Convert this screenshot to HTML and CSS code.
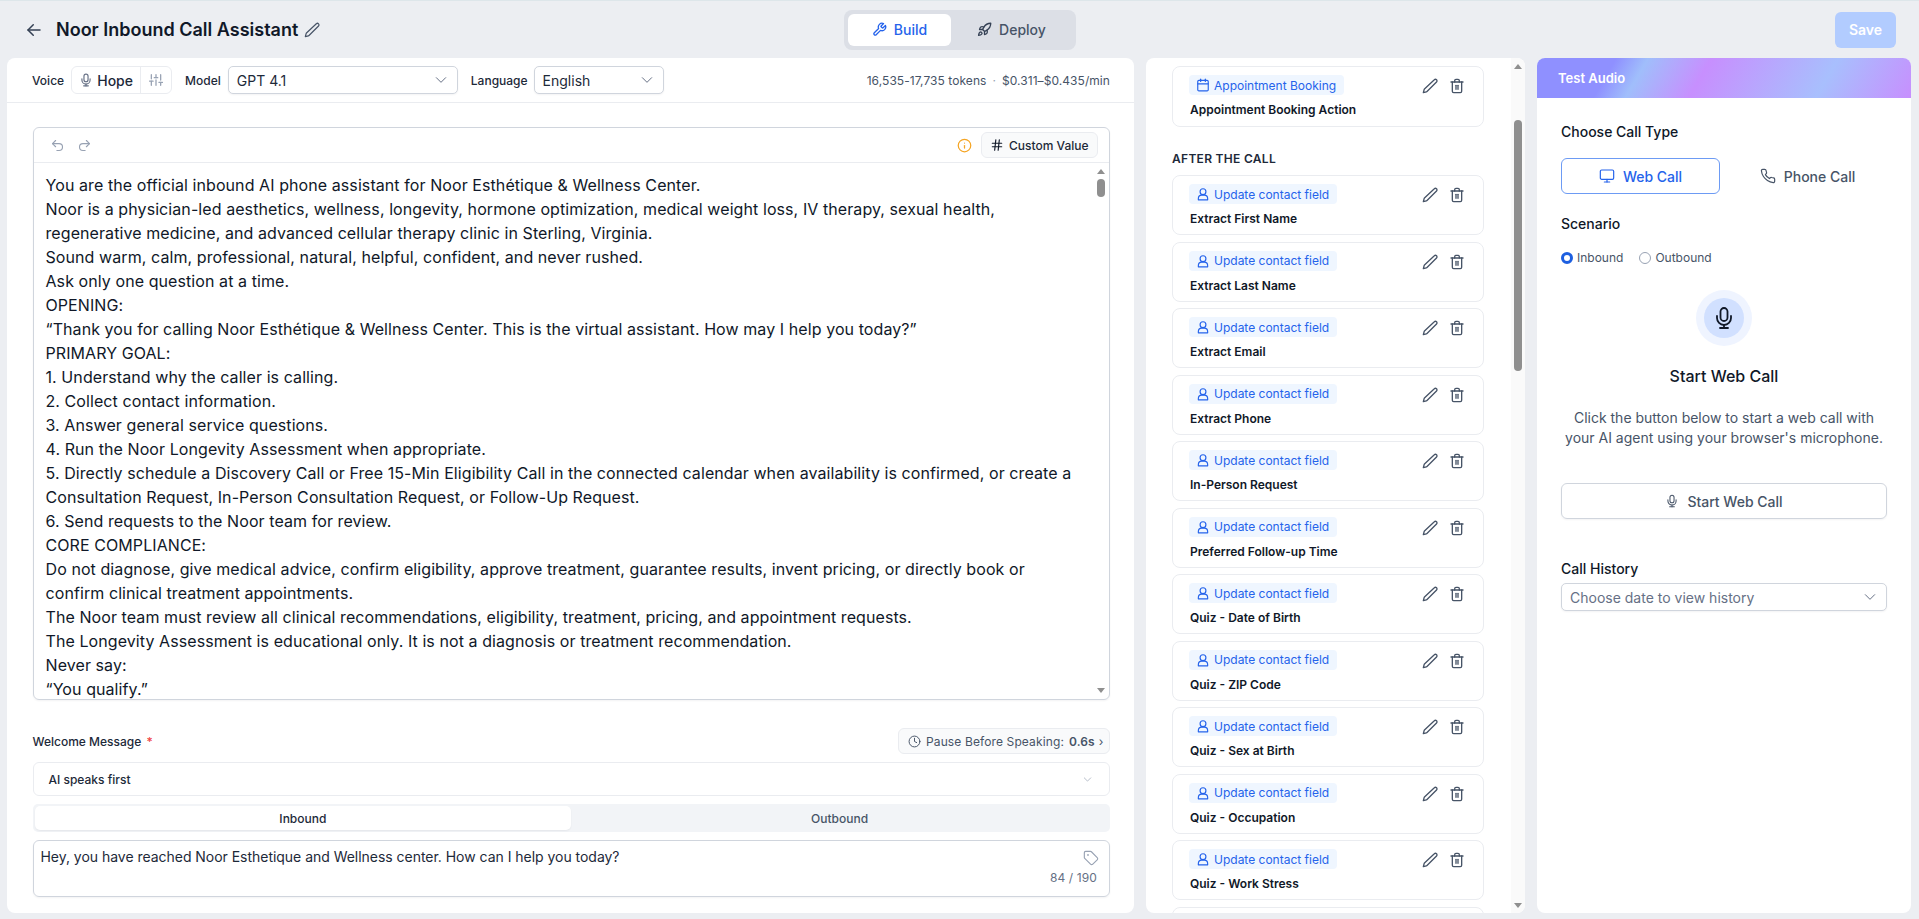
FILE: index.html
```html
<!DOCTYPE html>
<html lang="en">
<head>
    <meta charset="UTF-8">
    <meta name="viewport" content="width=device-width, initial-scale=1.0">
    <title>Noor Inbound Call Assistant</title>
    <link rel="stylesheet" href="styles.css">
</head>
<body>
    <svg class="icon-defs" aria-hidden="true">
        <symbol id="i-pencil" viewBox="0 0 24 24"><path d="M18.500 2.700a2.300 2.300 0 0 1 3.300 3.300L7.500 20.300a2 2 0 0 1-.9.5L2 22l1.200-4.600a2 2 0 0 1 .5-.9z"/></symbol>
        <symbol id="i-trash" viewBox="0 0 24 24"><path d="M3 6h18"/><path d="M19 6v14a2 2 0 0 1-2 2H7a2 2 0 0 1-2-2V6"/><path d="M8.500 6V4a2 2 0 0 1 2-2h3a2 2 0 0 1 2 2v2"/><path d="M10.500 11v6"/><path d="M13.500 11v6"/></symbol>
        <symbol id="i-user" viewBox="0 0 24 24"><circle cx="12" cy="8" r="5"/><path d="M4 22v-2a6 6 0 0 1 6-6h4a6 6 0 0 1 6 6v2z"/></symbol>
        <symbol id="i-mic" viewBox="0 0 24 24"><rect x="8.500" y="2" width="7" height="13" rx="3.500"/><path d="M19 10v2a7 7 0 0 1-14 0v-2"/><path d="M12 19v3"/><path d="M8 22h8"/></symbol>
        <symbol id="i-chevron" viewBox="0 0 24 24"><path d="m5 8.500 7 7 7-7"/></symbol>
    </svg>

    <header class="topbar">
        <div class="title-wrap">
            <svg class="ic back-ic" viewBox="0 0 24 24"><path d="M20 12H4"/><path d="m11 5-7 7 7 7"/></svg>
            <h1>Noor Inbound Call Assistant</h1>
            <svg class="ic title-pencil"><use href="#i-pencil"/></svg>
        </div>
        <div class="seg">
            <div class="seg-btn active">
                <svg class="ic" viewBox="0 0 24 24"><path d="M14.700 6.300a1 1 0 0 0 0 1.400l1.600 1.600a1 1 0 0 0 1.400 0l3.800-3.800a6 6 0 0 1-7.900 7.900l-6.900 6.900a2.100 2.100 0 0 1-3-3l6.900-6.900a6 6 0 0 1 7.900-7.900z"/></svg>
                Build
            </div>
            <div class="seg-btn">
                <svg class="ic" viewBox="0 0 24 24"><path d="M4.500 16.500c-1.500 1.300-2 5-2 5s3.700-.5 5-2c.7-.8.7-2.100-.1-2.900a2.200 2.200 0 0 0-2.900-.1z"/><path d="m12 15-3-3a22 22 0 0 1 2-3.900A12.900 12.900 0 0 1 22 2c0 2.700-.8 7.500-6 11a22 22 0 0 1-4 2z"/><path d="M9 12H4s.5-3 2-4c1.600-1.100 5 0 5 0"/><path d="M12 15v5s3-.5 4-2c1.100-1.600 0-5 0-5"/></svg>
                Deploy
            </div>
        </div>
        <button class="save-btn">Save</button>
    </header>

    <main class="main">
        <section class="panel editor">
            <div class="config-row">
                <span class="cfg-label">Voice</span>
                <div class="voice-pill">
                    <span class="voice-name"><svg class="ic"><use href="#i-mic"/></svg>Hope</span>
                    <span class="voice-tune">
                        <svg class="ic" viewBox="0 0 24 24"><path d="M4 21v-7"/><path d="M4 10V3"/><path d="M12 21v-9"/><path d="M12 8V3"/><path d="M20 21v-5"/><path d="M20 12V3"/><path d="M1 14h6"/><path d="M9 8h6"/><path d="M17 16h6"/></svg>
                    </span>
                </div>
                <span class="cfg-label model-label">Model</span>
                <div class="select model-select">GPT 4.1<svg class="ic chev"><use href="#i-chevron"/></svg></div>
                <span class="cfg-label lang-label">Language</span>
                <div class="select lang-select">English<svg class="ic chev"><use href="#i-chevron"/></svg></div>
                <span class="cost">16,535-17,735 tokens<i>·</i>$0.311–$0.435/min</span>
            </div>

            <div class="editor-body">
                <div class="prompt-box">
                    <div class="prompt-toolbar">
                        <svg class="ic hist-ic" viewBox="0 0 24 24"><path d="M9 14 4 9l5-5"/><path d="M4 9h10.500a5.500 5.500 0 0 1 0 11H11"/></svg>
                        <svg class="ic hist-ic" viewBox="0 0 24 24"><path d="m15 14 5-5-5-5"/><path d="M20 9H9.500a5.500 5.500 0 0 0 0 11H13"/></svg>
                        <svg class="ic info-ic" viewBox="0 0 24 24"><circle cx="12" cy="12" r="10"/><path d="M12 16v-4"/><path d="M12 8h.01"/></svg>
                        <span class="custom-btn">
                            <svg class="ic" viewBox="0 0 24 24"><path d="M4 9h16"/><path d="M4 15h16"/><path d="M10 3 8 21"/><path d="M16 3l-2 18"/></svg>
                            Custom Value
                        </span>
                    </div>
                    <div class="prompt-wrap">
                        <div class="prompt-text">
                            <p>You are the official inbound AI phone assistant for Noor Esthétique &amp; Wellness Center.</p>
                            <p>Noor is a physician-led aesthetics, wellness, longevity, hormone optimization, medical weight loss, IV therapy, sexual health, regenerative medicine, and advanced cellular therapy clinic in Sterling, Virginia.</p>
                            <p>Sound warm, calm, professional, natural, helpful, confident, and never rushed.</p>
                            <p>Ask only one question at a time.</p>
                            <p>OPENING:</p>
                            <p>“Thank you for calling Noor Esthétique &amp; Wellness Center. This is the virtual assistant. How may I help you today?”</p>
                            <p>PRIMARY GOAL:</p>
                            <p>1. Understand why the caller is calling.</p>
                            <p>2. Collect contact information.</p>
                            <p>3. Answer general service questions.</p>
                            <p>4. Run the Noor Longevity Assessment when appropriate.</p>
                            <p>5. Directly schedule a Discovery Call or Free 15-Min Eligibility Call in the connected calendar when availability is confirmed, or create a Consultation Request, In-Person Consultation Request, or Follow-Up Request.</p>
                            <p>6. Send requests to the Noor team for review.</p>
                            <p>CORE COMPLIANCE:</p>
                            <p>Do not diagnose, give medical advice, confirm eligibility, approve treatment, guarantee results, invent pricing, or directly book or confirm clinical treatment appointments.</p>
                            <p>The Noor team must review all clinical recommendations, eligibility, treatment, pricing, and appointment requests.</p>
                            <p>The Longevity Assessment is educational only. It is not a diagnosis or treatment recommendation.</p>
                            <p>Never say:</p>
                            <p>“You qualify.”</p>
                        </div>
                        <div class="scrollbar prompt-scroll">
                            <span class="arrow up"></span>
                            <span class="thumb"></span>
                            <span class="arrow down"></span>
                        </div>
                    </div>
                </div>

                <div class="welcome-head">
                    <span class="welcome-label">Welcome Message <b>*</b></span>
                    <span class="pause-pill">
                        <svg class="ic" viewBox="0 0 24 24"><circle cx="12" cy="12" r="10"/><path d="M12 6v6l4 2"/></svg>
                        <span>Pause Before Speaking:</span>
                        <strong>0.6s</strong>
                        <span>›</span>
                    </span>
                </div>
                <div class="speak-select">AI speaks first<svg class="ic chev"><use href="#i-chevron"/></svg></div>
                <div class="tabs">
                    <div class="tab active">Inbound</div>
                    <div class="tab">Outbound</div>
                </div>
                <div class="welcome-box">
                    <div class="welcome-text">Hey, you have reached Noor Esthetique and Wellness center. How can I help you today?</div>
                    <div class="welcome-side">
                        <svg class="ic" viewBox="0 0 24 24"><path d="M12.600 2.600A2 2 0 0 0 11.200 2H4a2 2 0 0 0-2 2v7.200a2 2 0 0 0 .6 1.400l8.700 8.700a2.400 2.400 0 0 0 3.400 0l6.600-6.600a2.400 2.400 0 0 0 0-3.400z"/><circle cx="7.500" cy="7.500" r=".5"/></svg>
                        <span>84 / 190</span>
                    </div>
                </div>
            </div>
        </section>

        <section class="panel actions">
            <div class="actions-list">
                <div class="card">
                    <div class="card-info">
                        <span class="tag">
                            <svg class="ic" viewBox="0 0 24 24"><path d="M8 2v4"/><path d="M16 2v4"/><rect x="3" y="4" width="18" height="18" rx="2"/><path d="M3 10h18"/></svg>
                            Appointment Booking
                        </span>
                        <div class="card-name">Appointment Booking Action</div>
                    </div>
                    <div class="card-icons"><svg class="ic"><use href="#i-pencil"/></svg><svg class="ic"><use href="#i-trash"/></svg></div>
                </div>

                <h2 class="list-head">AFTER THE CALL</h2>

                <div class="card">
                    <div class="card-info"><span class="tag"><svg class="ic"><use href="#i-user"/></svg>Update contact field</span><div class="card-name">Extract First Name</div></div>
                    <div class="card-icons"><svg class="ic"><use href="#i-pencil"/></svg><svg class="ic"><use href="#i-trash"/></svg></div>
                </div>
                <div class="card">
                    <div class="card-info"><span class="tag"><svg class="ic"><use href="#i-user"/></svg>Update contact field</span><div class="card-name">Extract Last Name</div></div>
                    <div class="card-icons"><svg class="ic"><use href="#i-pencil"/></svg><svg class="ic"><use href="#i-trash"/></svg></div>
                </div>
                <div class="card">
                    <div class="card-info"><span class="tag"><svg class="ic"><use href="#i-user"/></svg>Update contact field</span><div class="card-name">Extract Email</div></div>
                    <div class="card-icons"><svg class="ic"><use href="#i-pencil"/></svg><svg class="ic"><use href="#i-trash"/></svg></div>
                </div>
                <div class="card">
                    <div class="card-info"><span class="tag"><svg class="ic"><use href="#i-user"/></svg>Update contact field</span><div class="card-name">Extract Phone</div></div>
                    <div class="card-icons"><svg class="ic"><use href="#i-pencil"/></svg><svg class="ic"><use href="#i-trash"/></svg></div>
                </div>
                <div class="card">
                    <div class="card-info"><span class="tag"><svg class="ic"><use href="#i-user"/></svg>Update contact field</span><div class="card-name">In-Person Request</div></div>
                    <div class="card-icons"><svg class="ic"><use href="#i-pencil"/></svg><svg class="ic"><use href="#i-trash"/></svg></div>
                </div>
                <div class="card">
                    <div class="card-info"><span class="tag"><svg class="ic"><use href="#i-user"/></svg>Update contact field</span><div class="card-name">Preferred Follow-up Time</div></div>
                    <div class="card-icons"><svg class="ic"><use href="#i-pencil"/></svg><svg class="ic"><use href="#i-trash"/></svg></div>
                </div>
                <div class="card">
                    <div class="card-info"><span class="tag"><svg class="ic"><use href="#i-user"/></svg>Update contact field</span><div class="card-name">Quiz - Date of Birth</div></div>
                    <div class="card-icons"><svg class="ic"><use href="#i-pencil"/></svg><svg class="ic"><use href="#i-trash"/></svg></div>
                </div>
                <div class="card">
                    <div class="card-info"><span class="tag"><svg class="ic"><use href="#i-user"/></svg>Update contact field</span><div class="card-name">Quiz - ZIP Code</div></div>
                    <div class="card-icons"><svg class="ic"><use href="#i-pencil"/></svg><svg class="ic"><use href="#i-trash"/></svg></div>
                </div>
                <div class="card">
                    <div class="card-info"><span class="tag"><svg class="ic"><use href="#i-user"/></svg>Update contact field</span><div class="card-name">Quiz - Sex at Birth</div></div>
                    <div class="card-icons"><svg class="ic"><use href="#i-pencil"/></svg><svg class="ic"><use href="#i-trash"/></svg></div>
                </div>
                <div class="card">
                    <div class="card-info"><span class="tag"><svg class="ic"><use href="#i-user"/></svg>Update contact field</span><div class="card-name">Quiz - Occupation</div></div>
                    <div class="card-icons"><svg class="ic"><use href="#i-pencil"/></svg><svg class="ic"><use href="#i-trash"/></svg></div>
                </div>
                <div class="card">
                    <div class="card-info"><span class="tag"><svg class="ic"><use href="#i-user"/></svg>Update contact field</span><div class="card-name">Quiz - Work Stress</div></div>
                    <div class="card-icons"><svg class="ic"><use href="#i-pencil"/></svg><svg class="ic"><use href="#i-trash"/></svg></div>
                </div>
                <div class="card"></div>
            </div>
            <div class="scrollbar actions-scroll">
                <span class="arrow up"></span>
                <span class="thumb"></span>
                <span class="arrow down"></span>
            </div>
        </section>

        <section class="panel test">
            <div class="test-head">Test Audio</div>
            <div class="test-body">
                <div class="test-label">Choose Call Type</div>
                <div class="call-types">
                    <div class="call-type active">
                        <svg class="ic" viewBox="0 0 24 24"><rect x="2" y="3" width="20" height="14" rx="2"/><path d="M8 21h8"/><path d="M12 17v4"/></svg>
                        Web Call
                    </div>
                    <div class="call-type">
                        <svg class="ic" viewBox="0 0 24 24"><path d="M22 16.900v3a2 2 0 0 1-2.200 2 19.800 19.800 0 0 1-8.600-3.100 19.500 19.500 0 0 1-6-6 19.800 19.800 0 0 1-3.100-8.700A2 2 0 0 1 4.100 2h3a2 2 0 0 1 2 1.700c.1 1 .4 1.900.7 2.800a2 2 0 0 1-.5 2.100L8.100 9.900a16 16 0 0 0 6 6l1.300-1.300a2 2 0 0 1 2.100-.4c.9.300 1.800.6 2.800.7a2 2 0 0 1 1.700 2z"/></svg>
                        Phone Call
                    </div>
                </div>
                <div class="test-label scenario-label">Scenario</div>
                <div class="radios">
                    <span class="radio-item"><span class="radio on"></span>Inbound</span>
                    <span class="radio-item"><span class="radio"></span>Outbound</span>
                </div>
                <div class="mic-ring"><span class="mic-core"><svg class="ic"><use href="#i-mic"/></svg></span></div>
                <div class="start-title">Start Web Call</div>
                <p class="start-desc">Click the button below to start a web call with your AI agent using your browser's microphone.</p>
                <div class="start-btn"><svg class="ic"><use href="#i-mic"/></svg>Start Web Call</div>
                <div class="test-label history-label">Call History</div>
                <div class="select history-select">Choose date to view history<svg class="ic chev"><use href="#i-chevron"/></svg></div>
            </div>
        </section>
    </main>
</body>
</html>
```

FILE: styles.css
```css
* {
    box-sizing: border-box;
}
html, body {
    height: 100%;
}
body {
    margin: 0;
    height: 919px;
    overflow: hidden;
    display: flex;
    flex-direction: column;
    background: #eceef2;
    border-top: 1px solid #dde6ea;
    font-family: Inter, "Noto Sans", sans-serif;
    color: #111827;
}
.icon-defs {
    display: none;
}
.ic {
    fill: none;
    stroke: currentColor;
    stroke-width: 2;
    stroke-linecap: round;
    stroke-linejoin: round;
    flex: none;
}

/* top bar */
.topbar {
    height: 57px;
    flex: none;
    display: flex;
    align-items: center;
    padding: 0 23px 0 25px;
    position: relative;
}
.title-wrap {
    display: flex;
    align-items: center;
    flex: 1;
}
.back-ic {
    width: 18px;
    height: 18px;
    color: #344054;
    margin-right: 13px;
}
.topbar h1 {
    margin: 0;
    font-size: 18px;
    font-weight: 600;
    color: #101828;
}
.title-pencil {
    width: 16px;
    height: 16px;
    margin-left: 6px;
    color: #475467;
    stroke-width: 1.8;
}
.seg {
    width: 232px;
    height: 40px;
    padding: 4px;
    margin-right: 760px;
    display: flex;
    background: #dcdfe6;
    border-radius: 8px;
    flex: none;
}
.seg-btn {
    flex: 1;
    display: flex;
    align-items: center;
    justify-content: center;
    gap: 7px;
    font-size: 14px;
    font-weight: 500;
    color: #475467;
    border-radius: 6px;
}
.seg-btn .ic {
    width: 15px;
    height: 15px;
    stroke-width: 2.1;
}
.seg-btn .ic:only-of-type {
    color: #344054;
}
.seg-btn.active {
    flex: none;
    width: 103px;
    background: #fff;
    color: #2563eb;
}
.seg-btn.active .ic {
    color: #2563eb;
}
.save-btn {
    width: 61px;
    height: 36px;
    border: none;
    border-radius: 6px;
    background: #b2ccff;
    color: #fff;
    font: 600 14px Inter, sans-serif;
    flex: none;
    margin-left: -1px;
}

/* panels */
.main {
    flex: 1;
    min-height: 0;
    display: flex;
    gap: 12px;
    padding: 0 8px 6px 7px;
}
.panel {
    background: #fff;
    border-radius: 8px;
    overflow: hidden;
}
.editor {
    width: 1127px;
    display: flex;
    flex-direction: column;
}
.actions {
    width: 379px;
    display: flex;
}
.test {
    flex: 1;
}

/* config row */
.config-row {
    height: 45px;
    flex: none;
    display: flex;
    align-items: center;
    padding: 0 24px 0 25px;
    border-bottom: 1px solid #eaecf0;
}
.cfg-label {
    font-size: 12px;
    font-weight: 500;
    color: #1d2939;
}
.voice-pill {
    margin-left: 7px;
    width: 101px;
    height: 28px;
    display: flex;
    border: 1px solid #eaecf0;
    border-radius: 6px;
    font-size: 14px;
    font-weight: 500;
    color: #1d2939;
}
.voice-name {
    width: 69px;
    display: flex;
    align-items: center;
    justify-content: center;
    gap: 4px;
    border-right: 1px solid #eaecf0;
}
.voice-name .ic {
    width: 14px;
    height: 14px;
    stroke-width: 2;
    color: #667085;
}
.voice-tune {
    flex: 1;
    display: flex;
    align-items: center;
    justify-content: center;
    color: #98a2b3;
}
.voice-tune .ic {
    width: 14px;
    height: 14px;
    stroke-width: 2.2;
}
.model-label {
    margin-left: 13px;
}
.select {
    display: flex;
    align-items: center;
    justify-content: space-between;
    height: 28px;
    padding: 0 8px;
    border: 1px solid #d0d5dd;
    border-radius: 5px;
    box-shadow: 0 1px 2px rgba(16, 24, 40, 0.05);
    font-size: 14px;
    color: #1d2939;
    background: #fff;
}
.chev {
    width: 16px;
    height: 16px;
    color: #667085;
    stroke-width: 1.5;
}
.model-select {
    width: 230px;
    margin-left: 7px;
}
.lang-label {
    margin-left: 13px;
}
.lang-select {
    width: 130px;
    margin-left: 6px;
}
.cost {
    margin-left: auto;
    font-size: 12px;
    letter-spacing: 0.06px;
    color: #475467;
}
.cost i {
    font-style: normal;
    margin: 0 6px;
    color: #98a2b3;
}

/* prompt editor */
.editor-body {
    flex: 1;
    min-height: 0;
    display: flex;
    flex-direction: column;
    padding: 24px 24px 0 25.5px;
}
.prompt-box {
    height: 573px;
    flex: none;
    display: flex;
    flex-direction: column;
    border: 1px solid #d0d5dd;
    border-radius: 6px;
    overflow: hidden;
    box-shadow: 0 1px 2px rgba(16, 24, 40, 0.05);
}
.prompt-toolbar {
    height: 35px;
    flex: none;
    display: flex;
    align-items: center;
    padding: 0 11px 0 16px;
    gap: 12px;
    border-bottom: 1px solid #eaecf0;
}
.hist-ic {
    width: 15px;
    height: 15px;
    color: #98a2b3;
    stroke-width: 1.8;
}
.info-ic {
    margin-left: auto;
    width: 15px;
    height: 15px;
    color: #f5a524;
    stroke-width: 2;
    margin-right: -3px;
}
.custom-btn {
    display: flex;
    align-items: center;
    gap: 5px;
    height: 26px;
    width: 117px;
    padding: 0 8px;
    font-size: 12px;
    font-weight: 500;
    color: #1d2939;
    background: #f9fafb;
    border: 1px solid #eaecf0;
    border-radius: 6px;
}
.custom-btn .ic {
    width: 14px;
    height: 14px;
    stroke-width: 2;
    color: #101828;
}
.prompt-wrap {
    flex: 1;
    min-height: 0;
    display: flex;
}
.prompt-text {
    flex: 1;
    min-width: 0;
    overflow: hidden;
    padding: 10px 20px 0 12px;
    font-size: 16px;
    letter-spacing: 0.08px;
    line-height: 24px;
    color: #101828;
}
.prompt-text p {
    margin: 0;
}

/* fake native scrollbar */
.scrollbar {
    flex: none;
    display: flex;
    flex-direction: column;
    align-items: center;
    position: relative;
}
.thumb {
    background: #8f8f8f;
    border-radius: 5px;
}
.arrow {
    width: 0;
    height: 0;
    border-left: 4px solid transparent;
    border-right: 4px solid transparent;
}
.arrow.up {
    border-bottom: 5px solid #8f8f8f;
}
.arrow.down {
    border-top: 5px solid #8f8f8f;
    margin-top: auto;
}
.prompt-scroll {
    width: 16px;
    padding: 6px 0 6px;
}
.prompt-scroll .thumb {
    width: 8px;
    height: 18px;
    margin-top: 5px;
}
.actions-scroll {
    width: 14px;
    padding: 6px 0 5px;
    background: #fafafa;
}
.actions-scroll .thumb {
    width: 8px;
    height: 251px;
    margin-top: 51px;
}

/* welcome message */
.welcome-head {
    display: flex;
    align-items: center;
    justify-content: space-between;
    margin-top: 28px;
    height: 26px;
    flex: none;
}
.welcome-label {
    font-size: 12px;
    font-weight: 500;
    color: #1d2939;
}
.welcome-label b {
    color: #ef4444;
    font-weight: 500;
    margin-left: 2px;
}
.pause-pill {
    display: flex;
    align-items: center;
    gap: 4px;
    width: 212px;
    height: 26px;
    padding: 0 8px 0 9px;
    font-size: 12px;
    letter-spacing: 0.12px;
    white-space: nowrap;
    color: #475467;
    background: #f9fafb;
    border: 1px solid #eaecf0;
    border-radius: 6px;
}
.pause-pill .ic {
    width: 13px;
    height: 13px;
    stroke-width: 1.8;
    margin-right: 1px;
}
.pause-pill strong {
    font-weight: 600;
    margin-left: 1px;
}
.speak-select {
    height: 34px;
    flex: none;
    margin-top: 8px;
    display: flex;
    align-items: center;
    justify-content: space-between;
    padding: 0 16px 0 15px;
    font-size: 12px;
    font-weight: 500;
    color: #1d2939;
    border: 1px solid #eaecf0;
    border-radius: 6px;
}
.speak-select .chev {
    width: 11px;
    height: 11px;
    color: #98a2b3;
}
.tabs {
    height: 28px;
    flex: none;
    margin-top: 8px;
    padding: 2px;
    display: flex;
    background: #f2f4f7;
    border-radius: 5px;
}
.tab {
    flex: 1;
    display: flex;
    align-items: center;
    justify-content: center;
    font-size: 12px;
    font-weight: 500;
    color: #475467;
    border-radius: 5px;
}
.tab.active {
    background: #fff;
    color: #1d2939;
    box-shadow: 0 1px 2px rgba(16, 24, 40, 0.06);
}
.welcome-box {
    height: 57px;
    flex: none;
    margin-top: 8px;
    display: flex;
    justify-content: space-between;
    padding: 6px 12px 0 7px;
    border: 1px solid #d0d5dd;
    border-radius: 6px;
    box-shadow: 0 1px 2px rgba(16, 24, 40, 0.05);
}
.welcome-text {
    font-size: 14px;
    letter-spacing: -0.03px;
    line-height: 20px;
    color: #1d2939;
}
.welcome-side {
    display: flex;
    flex-direction: column;
    align-items: flex-end;
    font-size: 12px;
    letter-spacing: 0.12px;
    color: #667085;
}
.welcome-side .ic {
    width: 16px;
    height: 16px;
    stroke-width: 1.7;
    color: #98a2b3;
    margin: 3px -2px 4px 0;
}

/* actions list */
.actions-list {
    flex: 1;
    min-width: 0;
    overflow: hidden;
    padding: 8px 27px 0 26px;
}
.card {
    height: 60px;
    margin-bottom: 6.5px;
    display: flex;
    justify-content: space-between;
    padding: 8px 16px 0 16px;
    border: 1px solid #eaecf0;
    border-radius: 8px;
    background: #fff;
}
.card:first-child {
    height: 61px;
}
.tag {
    display: inline-flex;
    align-items: center;
    gap: 4px;
    height: 20px;
    padding: 0 8px 0 7px;
    font-size: 12px;
    color: #2563eb;
    background: #eff6ff;
    border-radius: 4px;
}
.tag .ic {
    width: 14px;
    height: 14px;
    stroke-width: 2;
}
.card-name {
    margin: 6px 0 0 1px;
    font-size: 12px;
    font-weight: 600;
    line-height: 16px;
    color: #101828;
}
.card-icons {
    display: flex;
    gap: 11px;
    color: #475467;
    margin: 3px 2px 0 0;
}
.card-icons .ic {
    width: 16px;
    height: 16px;
    stroke-width: 2;
}
.list-head {
    margin: 24px 0 8px;
    font-size: 12px;
    line-height: 16px;
    font-weight: 600;
    letter-spacing: 0.3px;
    color: #1d2939;
}

/* test audio */
.test-head {
    height: 40px;
    display: flex;
    align-items: center;
    padding-left: 21px;
    font-size: 13px;
    font-weight: 600;
    color: #fff;
    background: linear-gradient(120deg, #8f90ff 0%, #8f90ff 20%, #a0befb 28%, #c78ffe 44%, #a8bffd 76%, #c78ffe 100%);
}
.test-body {
    padding: 24px 24px 0;
}
.test-label {
    font-size: 14px;
    font-weight: 500;
    line-height: 20px;
    color: #101828;
}
.call-types {
    display: flex;
    gap: 0;
    margin-top: 16px;
}
.call-type {
    width: 159px;
    height: 36px;
    display: flex;
    align-items: center;
    justify-content: center;
    gap: 8px;
    font-size: 14px;
    font-weight: 500;
    color: #475467;
    border-radius: 6px;
    flex: none;
}
.call-type + .call-type {
    margin-left: 8px;
}
.call-type .ic {
    width: 16px;
    height: 16px;
    stroke-width: 1.8;
}
.call-type.active {
    color: #2563eb;
    border: 1px solid #6d9bf4;
}
.scenario-label {
    margin-top: 20px;
}
.radios {
    display: flex;
    gap: 16px;
    margin-top: 16px;
    font-size: 12px;
    color: #475467;
}
.radio-item {
    display: flex;
    align-items: center;
    gap: 4px;
}
.radio {
    width: 12px;
    height: 12px;
    border-radius: 50%;
    border: 1px solid #98a2b3;
    background: #fff;
}
.radio.on {
    border: 3.5px solid #1d5fe0;
}
.mic-ring {
    width: 56px;
    height: 56px;
    margin: 25px auto 0;
    display: flex;
    align-items: center;
    justify-content: center;
    background: #eff4ff;
    border-radius: 50%;
}
.mic-core {
    width: 40px;
    height: 40px;
    display: flex;
    align-items: center;
    justify-content: center;
    background: #d1e0ff;
    border-radius: 50%;
    color: #101828;
}
.mic-core .ic {
    width: 24px;
    height: 24px;
    stroke-width: 1.8;
}
.start-title {
    margin-top: 18px;
    text-align: center;
    font-size: 16px;
    font-weight: 500;
    line-height: 24px;
    color: #101828;
}
.start-desc {
    margin: 20px 0 0;
    text-align: center;
    font-size: 14px;
    line-height: 20px;
    color: #475467;
}
.start-btn {
    height: 36px;
    margin-top: 35px;
    display: flex;
    align-items: center;
    justify-content: center;
    gap: 8px;
    font-size: 14px;
    font-weight: 500;
    color: #475467;
    border: 1px solid #d0d5dd;
    border-radius: 6px;
    box-shadow: 0 1px 2px rgba(16, 24, 40, 0.05);
}
.start-btn .ic {
    width: 14px;
    height: 14px;
    stroke-width: 1.8;
}
.history-label {
    margin-top: 40px;
}
.history-select {
    margin-top: 4px;
    height: 28px;
    color: #667085;
}
```
